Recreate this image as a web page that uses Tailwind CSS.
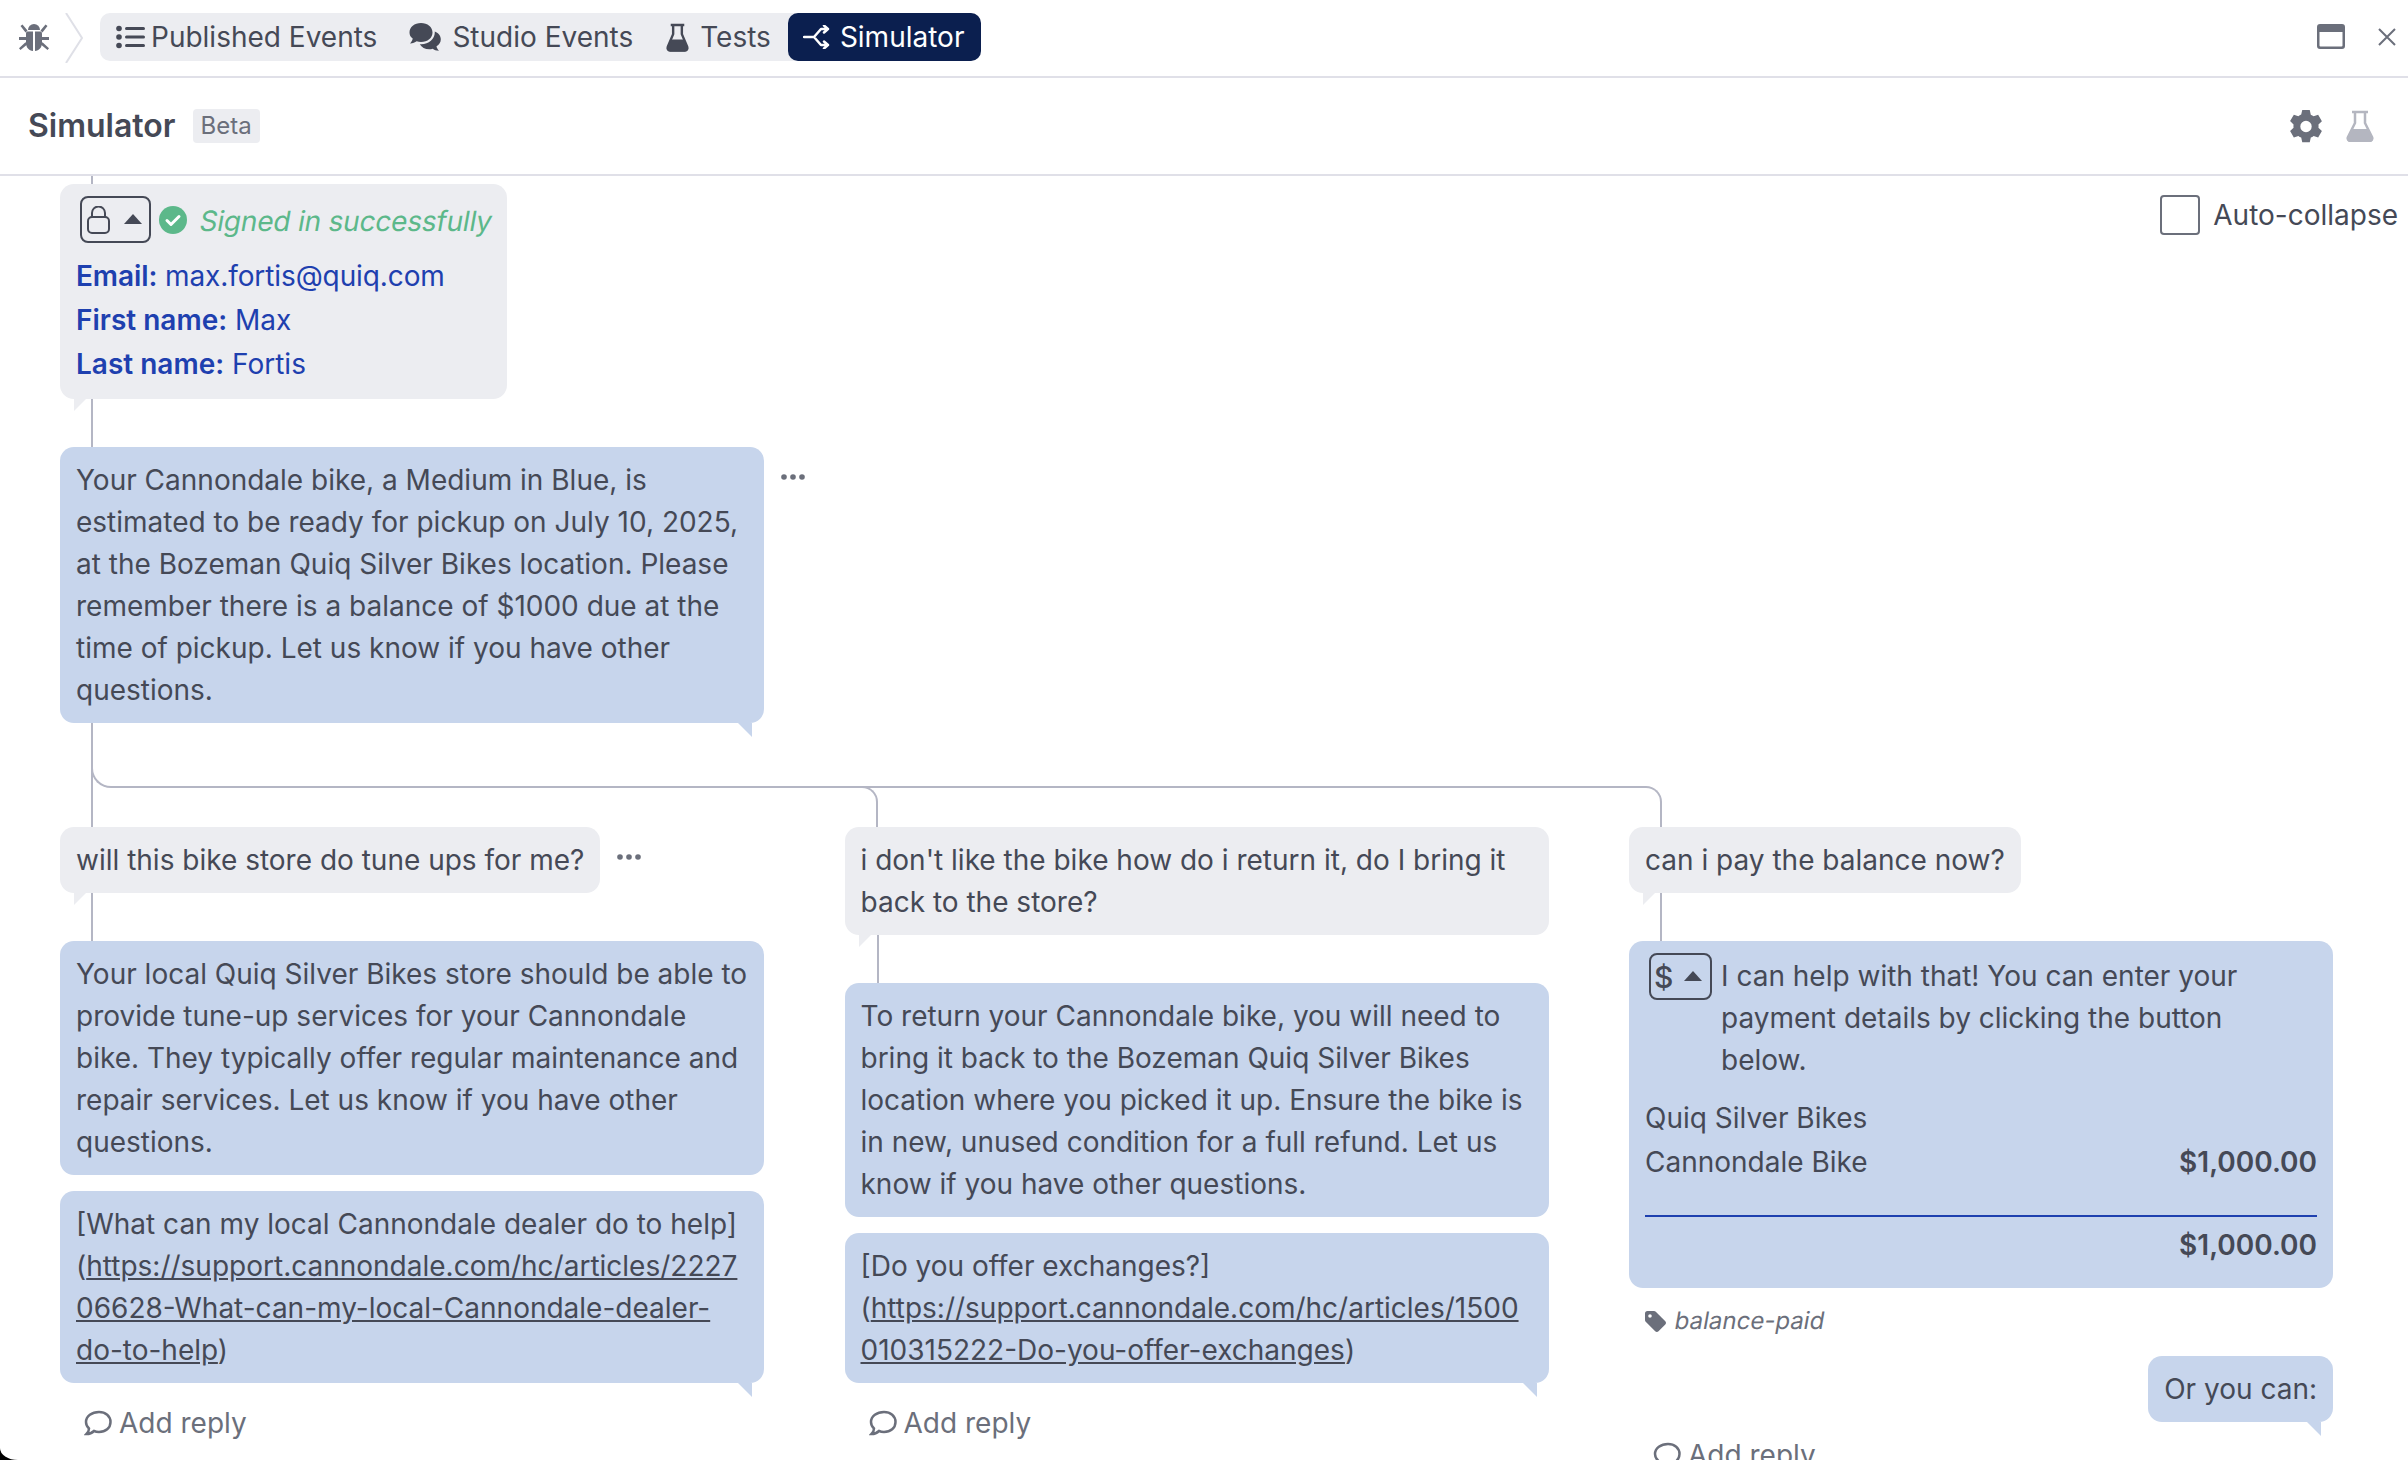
<!DOCTYPE html>
<html>
<head>
  <title>Simulator</title>
  <script src="https://cdn.jsdelivr.net/npm/@tailwindcss/browser@4"></script>
</head>
<body class="bg-white">
<div class="relative w-[2408px] h-[1460px] overflow-hidden font-['Inter',sans-serif] text-[28px] leading-[42px] text-[#454956]">

  <!-- top bar -->
  <header class="h-[78px] border-b-2 border-[#e0e0e8] flex items-start pt-[13px]">
    <svg class="ml-[19px] mt-[10px] w-[30px] h-[29px] text-[#6b6f7b]" viewBox="0 0 30 29" fill="currentColor">
      <path d="M9 7a6 6 0 0 1 12 0z"/>
      <path d="M8 8.500h6v19.500c-4-.5-7-3.500-7-8v-9c0-1.500.5-2.500 1-2.500zM16 8.500h6c.5 0 1 1 1 2.500v9c0 4.500-3 7.500-7 8z"/>
      <path d="M1.500 3l2-1.500 5 6-2 2zM28.500 3l-2-1.500-5 6 2 2zM0 14h7v3H0zM23 14h7v3h-7zM1.500 27l-1.500-1.800 6.500-6 2 2zM28.500 27l1.500-1.800-6.500-6-2 2z"/>
    </svg>
    <svg class="ml-[16px] w-[19px] h-[50px] text-[#dfe0e7]" viewBox="0 0 19 50" fill="none" stroke="currentColor" stroke-width="2"><path d="M1 0l16 25L1 50"/></svg>
    <nav class="ml-[16px] h-[48px] flex items-stretch bg-[#ecedf1] rounded-[10px]">
      <div class="flex items-center pl-[16px] pr-[16px] gap-[6px]">
        <svg class="w-[29px] h-[24px]" viewBox="0 0 29 24" fill="currentColor"><circle cx="3" cy="3.500" r="2.800"/><circle cx="3" cy="12" r="2.800"/><circle cx="3" cy="20.500" r="2.800"/><rect x="9" y="2" width="20" height="3" rx="1.500"/><rect x="9" y="10.500" width="20" height="3" rx="1.500"/><rect x="9" y="19" width="20" height="3" rx="1.500"/></svg>
        <span>Published Events</span>
      </div>
      <div class="flex items-center pl-[16px] pr-[16px] gap-[7px]">
        <svg class="w-[36px] h-[30px]" viewBox="0 0 36 30" fill="currentColor"><path d="M12 1c6.500 0 11.500 4 11.500 9.500S18.500 20 12 20c-1.500 0-3-.2-4.300-.7C6 20.500 4 21.500 1 21.500c1.500-1.500 2.500-3.500 2.700-5C1.500 15 .5 13 .5 10.500 .5 5 5.500 1 12 1z"/><path d="M25.500 9c.2.500.3 1 .3 1.500 0 6.500-6 11.800-13.500 11.800-.500 0-1 0-1.500-.1 1.800 3 5.200 5 9.500 5 1.200 0 2.300-.1 3.300-.5 1.500 1 3.500 2 6.400 2-1.300-1.300-2.300-3-2.500-4.500 2.700-1.500 4.300-4 4.300-7 0-3.500-2.500-6.500-6.300-7.700z"/></svg>
        <span>Studio Events</span>
      </div>
      <div class="flex items-center pl-[16px] pr-[17px] gap-[10px]">
        <svg class="w-[25px] h-[29px]" viewBox="0 0 24 30" fill="none" stroke="currentColor" stroke-width="2.500"><path d="M5 2h14M7.500 2v9.500L2 24.500c-.8 2 .3 4 2.500 4h15c2.200 0 3.300-2 2.500-4l-5.500-13V2"/><path fill="currentColor" stroke="none" d="M5.500 17h13l4 8.500c.5 2-.5 4-3 4H4.500c-2.500 0-3.500-2-3-4z"/></svg>
        <span>Tests</span>
      </div>
      <div class="flex items-center pl-[15px] pr-[17px] gap-[9px] bg-[#0b1f4f] text-white rounded-[10px]">
        <svg class="w-[28px] h-[24px]" viewBox="0 0 28 24" fill="none" stroke="currentColor" stroke-width="2.500" stroke-linecap="round" stroke-linejoin="round"><path d="M1 12h10l7-8h7M11 12l7 8h7M21 .500L25 4l-4 3.500M21 16.500L25 20l-4 3.500"/></svg>
        <span>Simulator</span>
      </div>
    </nav>
    <div class="ml-auto flex items-start">
      <svg class="mt-[11px] w-[28px] h-[25px] text-[#6b6f7b]" viewBox="0 0 28 25" fill="currentColor"><path fill-rule="evenodd" d="M3 0h22a3 3 0 0 1 3 3v19a3 3 0 0 1-3 3H3a3 3 0 0 1-3-3V3a3 3 0 0 1 3-3zM2.500 8v13.500a1 1 0 0 0 1 1h21a1 1 0 0 0 1-1V8z"/></svg>
      <svg class="ml-[33px] mr-[12px] mt-[15px] w-[18px] h-[18px] text-[#6b6f7b]" viewBox="0 0 18 18" fill="none" stroke="currentColor" stroke-width="2"><path d="M1 1l16 16M17 1L1 17"/></svg>
    </div>
  </header>

  <!-- page title -->
  <div class="h-[98px] border-b-2 border-[#e0e0e8] flex items-center pl-[28px] pr-[34px]">
    <h1 class="text-[32px] font-semibold">Simulator</h1>
    <span class="ml-[17px] h-[34px] px-[8px] flex items-center bg-[#ecedf1] rounded-[4px] text-[24px] text-[#6b6f7b]">Beta</span>
    <svg class="ml-auto w-[32px] h-[33px] text-[#6b6f7b]" viewBox="1.400 1 21.200 22" fill="currentColor"><path fill-rule="evenodd" d="M14.500 1l.7 3.100c.7.300 1.300.6 1.900 1.100l3-1 2.500 4.300-2.300 2.100c.1.800.1 1.500 0 2.300l2.300 2.100-2.500 4.300-3-1c-.6.500-1.200.8-1.900 1.100l-.7 3.100h-5l-.7-3.100c-.7-.3-1.300-.6-1.900-1.100l-3 1-2.500-4.300 2.300-2.100c-.1-.8-.1-1.500 0-2.300L1.400 8.400l2.500-4.300 3 1c.6-.5 1.200-.8 1.900-1.100L9.500 1zM12 8.200a3.800 3.800 0 1 0 0 7.600 3.800 3.800 0 0 0 0-7.600z"/></svg>
    <svg class="ml-[24px] w-[28px] h-[32px] text-[#b4b6c0]" viewBox="0 0 28 32" fill="none" stroke="currentColor" stroke-width="2.500"><path d="M6 2h16M9 2v11L2 27c-1 2 .5 4 3 4h18c2.500 0 4-2 3-4l-7-14V2"/><path fill="currentColor" stroke="none" d="M6.500 19h15l5 9c.8 2-.5 4-3 4h-19c-2.500 0-3.800-2-3-4z"/></svg>
  </div>

  <!-- conversation tree -->
  <main class="relative pl-[60px]">
    <div class="absolute right-[10px] top-[18px] flex items-center gap-[13px]">
      <div class="w-[40px] h-[40px] border-2 border-[#6b6f7b] rounded-[4px] bg-white"></div>
      <span>Auto-collapse</span>
    </div>

    <div class="ml-[31px] w-[2px] h-[8px] bg-[#b4b6c4]"></div>

    <div class="relative w-[447px] h-[215px] bg-[#ecedf1] rounded-[14px] pl-[16px] pr-[14px] pt-[12px] text-[#1e40af]">
      <div class="flex items-center h-[47px] mb-[11px] ml-[4px]">
        <div class="w-[71px] h-[47px] border-2 border-[#454956] rounded-[8px] flex items-center pl-[5px] gap-[14px] shrink-0">
          <svg class="w-[23px] h-[28px] text-[#454956]" viewBox="0 0 23 28" fill="none" stroke="currentColor" stroke-width="2"><rect x="1" y="11" width="21" height="16" rx="4"/><path d="M5 11V7a6.500 6.500 0 0 1 13 0v4"/></svg>
          <svg class="w-[18px] h-[10px] -mt-[2px] text-[#454956]" viewBox="0 0 18 10" fill="currentColor"><path d="M9 0l9 10H0z"/></svg>
        </div>
        <svg class="ml-[8px] w-[28px] h-[28px] shrink-0" viewBox="0 0 28 28"><circle cx="14" cy="14" r="14" fill="#5cb88a"/><path d="M8 14.500l4 4 8-8" fill="none" stroke="#fff" stroke-width="3" stroke-linecap="round" stroke-linejoin="round"/></svg>
        <span class="ml-[13px] mt-[2px] inline-block -skew-x-[10deg] tracking-[-0.2px] text-[#5cb88a] whitespace-nowrap">Signed in successfully</span>
      </div>
      <p class="h-[44px] leading-[44px] tracking-[-0.1px]"><b class="font-semibold">Email:</b> max.fortis@quiq.com</p>
      <p class="h-[44px] leading-[44px]"><b class="font-semibold">First name:</b> Max</p>
      <p class="h-[44px] leading-[44px]"><b class="font-semibold">Last name:</b> Fortis</p>
      <div class="absolute left-[14px] top-full w-0 h-0 border-l-[12px] border-l-[#ecedf1] border-b-[12px] border-b-transparent"></div>
    </div>

    <div class="ml-[31px] w-[2px] h-[48px] bg-[#b4b6c4]"></div>

    <div class="flex items-start">
      <div class="relative w-[704px] bg-[#c7d5ec] rounded-[14px] px-[16px] py-[12px]">
        Your Cannondale bike, a Medium in Blue, is estimated to be ready for pickup on July 10, 2025, at the Bozeman Quiq Silver Bikes location. Please remember there is a balance of $1000 due at the time of pickup. Let us know if you have other questions.
        <div class="absolute right-[12px] top-full w-0 h-0 border-r-[14px] border-r-[#c7d5ec] border-b-[14px] border-b-transparent"></div>
      </div>
      <svg class="ml-[17px] mt-[27px] w-[24px] h-[6px] text-[#6b6f7b]" viewBox="0 0 24 6" fill="currentColor"><circle cx="3" cy="3" r="2.800"/><circle cx="12" cy="3" r="2.800"/><circle cx="21" cy="3" r="2.800"/></svg>
    </div>

    <!-- branch lines -->
    <div class="relative h-[104px]">
      <div class="absolute left-[31px] top-0 w-[2px] h-full bg-[#b4b6c4]"></div>
      <div class="absolute left-[31px] top-0 w-[1555px] h-[65px] border-l-2 border-b-2 border-[#b4b6c4] rounded-bl-[20px]"></div>
      <div class="absolute left-[798px] top-[63px] w-[20px] h-[41px] border-t-2 border-r-2 border-[#b4b6c4] rounded-tr-[16px]"></div>
      <div class="absolute left-[1582px] top-[63px] w-[20px] h-[41px] border-t-2 border-r-2 border-[#b4b6c4] rounded-tr-[16px]"></div>
    </div>

    <div class="grid grid-cols-[704px_704px_704px] gap-x-[80.5px] items-start">

      <!-- first branch -->
      <section>
        <div class="flex items-start">
          <div class="relative bg-[#ecedf1] rounded-[14px] px-[16px] py-[12px]">
            will this bike store do tune ups for me?
            <div class="absolute left-[14px] top-full w-0 h-0 border-l-[12px] border-l-[#ecedf1] border-b-[12px] border-b-transparent"></div>
          </div>
          <svg class="ml-[17px] mt-[27px] w-[24px] h-[6px] text-[#6b6f7b]" viewBox="0 0 24 6" fill="currentColor"><circle cx="3" cy="3" r="2.800"/><circle cx="12" cy="3" r="2.800"/><circle cx="21" cy="3" r="2.800"/></svg>
        </div>
        <div class="ml-[31px] w-[2px] h-[48px] bg-[#b4b6c4]"></div>
        <div class="bg-[#c7d5ec] rounded-[14px] px-[16px] py-[12px]">
          Your local Quiq Silver Bikes store should be able to provide tune-up services for your Cannondale bike. They typically offer regular maintenance and repair services. Let us know if you have other questions.
        </div>
        <div class="relative mt-[16px] bg-[#c7d5ec] rounded-[14px] px-[16px] py-[12px]">
          [What can my local Cannondale dealer do to help]<br>
          (<span class="underline">https://support.cannondale.com/hc/articles/2227<br>06628-What-can-my-local-Cannondale-dealer-<br>do-to-help</span>)
          <div class="absolute right-[12px] top-full w-0 h-0 border-r-[14px] border-r-[#c7d5ec] border-b-[14px] border-b-transparent"></div>
        </div>
        <div class="mt-[19px] ml-[24px] flex items-center gap-[7px] text-[#6b6f7b]">
          <svg class="w-[28px] h-[26px]" viewBox="0 0 28 26" fill="none" stroke="currentColor" stroke-width="2.500"><path d="M15 2c6.500 0 11.500 4 11.500 10S21.500 22 15 22c-2 0-3.500-.3-5-1-1.500 1.500-4 3-7.500 3 1.500-1.500 2.500-3.500 2.500-5.500-2-1.800-3-4-3-6.500C2 6 8 2 15 2z"/></svg>
          <span>Add reply</span>
        </div>
      </section>

      <!-- second branch -->
      <section>
        <div class="relative bg-[#ecedf1] rounded-[14px] px-[16px] py-[12px]">
          i don't like the bike how do i return it, do I bring it back to the store?
          <div class="absolute left-[14px] top-full w-0 h-0 border-l-[12px] border-l-[#ecedf1] border-b-[12px] border-b-transparent"></div>
        </div>
        <div class="ml-[32px] w-[2px] h-[48px] bg-[#b4b6c4]"></div>
        <div class="bg-[#c7d5ec] rounded-[14px] px-[16px] py-[12px]">
          To return your Cannondale bike, you will need to bring it back to the Bozeman Quiq Silver Bikes location where you picked it up. Ensure the bike is in new, unused condition for a full refund. Let us know if you have other questions.
        </div>
        <div class="relative mt-[16px] bg-[#c7d5ec] rounded-[14px] px-[16px] py-[12px]">
          [Do you offer exchanges?]<br>
          (<span class="underline">https://support.cannondale.com/hc/articles/1500<br>010315222-Do-you-offer-exchanges</span>)
          <div class="absolute right-[12px] top-full w-0 h-0 border-r-[14px] border-r-[#c7d5ec] border-b-[14px] border-b-transparent"></div>
        </div>
        <div class="mt-[19px] ml-[24px] flex items-center gap-[7px] text-[#6b6f7b]">
          <svg class="w-[28px] h-[26px]" viewBox="0 0 28 26" fill="none" stroke="currentColor" stroke-width="2.500"><path d="M15 2c6.500 0 11.500 4 11.500 10S21.500 22 15 22c-2 0-3.500-.3-5-1-1.500 1.500-4 3-7.500 3 1.500-1.500 2.500-3.500 2.500-5.500-2-1.800-3-4-3-6.500C2 6 8 2 15 2z"/></svg>
          <span>Add reply</span>
        </div>
      </section>

      <!-- third branch -->
      <section>
        <div class="relative w-fit bg-[#ecedf1] rounded-[14px] px-[16px] py-[12px]">
          can i pay the balance now?
          <div class="absolute left-[14px] top-full w-0 h-0 border-l-[12px] border-l-[#ecedf1] border-b-[12px] border-b-transparent"></div>
        </div>
        <div class="ml-[31px] w-[2px] h-[48px] bg-[#b4b6c4]"></div>
        <div class="h-[347px] bg-[#c7d5ec] rounded-[14px] pl-[20px] pr-[16px] pt-[12px]">
          <div class="flex items-start">
            <div class="w-[63px] h-[47px] border-2 border-[#454956] rounded-[8px] flex items-center pl-[3px] gap-[11px] shrink-0">
              <span class="text-[30px] font-medium text-[#454956]">$</span>
              <svg class="w-[18px] h-[10px] -mt-[2px] text-[#454956]" viewBox="0 0 18 10" fill="currentColor"><path d="M9 0l9 10H0z"/></svg>
            </div>
            <p class="ml-[9px] mt-[2px] w-[560px]">I can help with that! You can enter your payment details by clicking the button below.</p>
          </div>
          <div class="-ml-[4px] mt-[16px]">Quiq Silver Bikes</div>
          <div class="-ml-[4px] mt-[2px] flex justify-between"><span>Cannondale Bike</span><b class="font-semibold">$1,000.00</b></div>
          <div class="-ml-[4px] mt-[32px] h-[2px] bg-[#1e40af]"></div>
          <div class="mt-[7px] text-right font-semibold">$1,000.00</div>
        </div>
        <div class="mt-[21px] ml-[16px] flex items-center gap-[9px] text-[24px] leading-[24px] text-[#6b6f7b]">
          <svg class="w-[21px] h-[21px]" viewBox="0 0 21 21" fill="currentColor"><path fill-rule="evenodd" d="M0 2.500A2.500 2.500 0 0 1 2.500 0H9c.7 0 1.300.3 1.800.7l9.500 9.500c.9.900.9 2.400 0 3.300l-6.800 6.800c-.9.900-2.400.9-3.300 0L.7 10.800C.3 10.300 0 9.700 0 9zM5 3.200a1.800 1.800 0 1 0 0 3.600 1.800 1.800 0 0 0 0-3.600z"/></svg>
          <span class="inline-block -skew-x-[10deg]">balance-paid</span>
        </div>
        <div class="relative mt-[23px] ml-auto w-fit bg-[#c7d5ec] rounded-[14px] px-[16px] py-[12px]">
          Or you can:
          <div class="absolute right-[12px] top-full w-0 h-0 border-r-[14px] border-r-[#c7d5ec] border-b-[14px] border-b-transparent"></div>
        </div>
        <div class="mt-[12px] ml-[24px] flex items-center gap-[7px] text-[#6b6f7b]">
          <svg class="w-[28px] h-[26px]" viewBox="0 0 28 26" fill="none" stroke="currentColor" stroke-width="2.500"><path d="M15 2c6.500 0 11.500 4 11.500 10S21.500 22 15 22c-2 0-3.500-.3-5-1-1.500 1.500-4 3-7.500 3 1.500-1.500 2.500-3.500 2.500-5.500-2-1.800-3-4-3-6.500C2 6 8 2 15 2z"/></svg>
          <span>Add reply</span>
        </div>
      </section>
    </div>
  </main>

  <!-- window corner -->
  <div class="absolute left-0 bottom-0 w-[18px] h-[12px] bg-black"><div class="w-full h-full bg-white rounded-bl-[18px_12px]"></div></div>
</div>
</body>
</html>
